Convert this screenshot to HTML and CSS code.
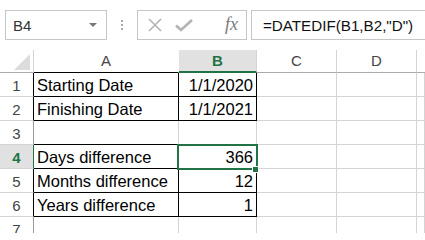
FILE: index.html
```html
<!DOCTYPE html>
<html>
<head>
<meta charset="utf-8">
<link rel="stylesheet" href="styles.css">
</head>
<body>
<div class="app">
  <div class="toolbar">
    <div class="namebox"><span class="ref">B4</span><span class="arrow"></span></div>
    <div class="grip"><i></i><i></i><i></i></div>
    <div class="btns">
      <svg class="ic-x" width="14" height="14" viewBox="0 0 14 14"><path d="M1 1 L13 13 M13 1 L1 13" stroke="#b4b4b4" stroke-width="1.6" fill="none"/></svg>
      <svg class="ic-ok" width="18" height="14" viewBox="0 0 18 14"><path d="M1 7.5 L6 12 L17 2" stroke="#b4b4b4" stroke-width="2.6" fill="none"/></svg>
      <span class="fx">fx</span>
    </div>
    <div class="formula">=DATEDIF(B1,B2,"D")</div>
  </div>
  <div class="sheet">
    <div class="grid">
      <div class="c corner"><span class="tri"></span></div>
      <div class="c ch ch-a">A</div>
      <div class="c ch ch-sel">B</div>
      <div class="c ch">C</div>
      <div class="c ch">D</div>
      <div class="c ch ch-e"></div>

      <div class="c rh bk-r">1</div>
      <div class="c t bk-r bk-b">Starting Date</div>
      <div class="c n bk-r bk-b">1/1/2020</div>
      <div class="c"></div><div class="c"></div><div class="c"></div>

      <div class="c rh bk-r">2</div>
      <div class="c t bk-r bk-b">Finishing Date</div>
      <div class="c n bk-r bk-b">1/1/2021</div>
      <div class="c"></div><div class="c"></div><div class="c"></div>

      <div class="c rh">3</div>
      <div class="c t bk-b"></div>
      <div class="c n bk-b"></div>
      <div class="c"></div><div class="c"></div><div class="c"></div>

      <div class="c rh rh-sel">4</div>
      <div class="c t bk-r bk-b">Days difference</div>
      <div class="c n bk-r bk-b">366</div>
      <div class="c"></div><div class="c"></div><div class="c"></div>

      <div class="c rh bk-r">5</div>
      <div class="c t bk-r bk-b">Months difference</div>
      <div class="c n bk-r bk-b">12</div>
      <div class="c"></div><div class="c"></div><div class="c"></div>

      <div class="c rh bk-r">6</div>
      <div class="c t bk-r bk-b">Years difference</div>
      <div class="c n bk-r bk-b">1</div>
      <div class="c"></div><div class="c"></div><div class="c"></div>

      <div class="c rh">7</div>
      <div class="c t"></div>
      <div class="c n"></div>
      <div class="c"></div><div class="c"></div><div class="c"></div>
    </div>
    <div class="sel"></div>
    <div class="handle"></div>
  </div>
</div>
</body>
</html>
```

FILE: styles.css
```css
* { box-sizing: border-box; }
html, body { margin: 0; padding: 0; background: #fff; }
body { width: 425px; height: 233px; overflow: hidden; font-family: "Liberation Sans", Arial, sans-serif; }

.app { width: 425px; height: 233px; overflow: hidden; }

.toolbar {
  height: 50px;
  padding: 10px 0 0 5px;
  display: flex;
  align-items: flex-start;
}
.toolbar > * { flex-shrink: 0; }
.namebox {
  width: 102px; height: 30px;
  border: 1px solid #c6c6c6;
  display: flex; align-items: center;
  padding-left: 7px;
  position: relative;
}
.ref { font-size: 15px; color: #333; }
.arrow {
  position: absolute; right: 9px; top: 12px;
  width: 0; height: 0;
  border-left: 4px solid transparent;
  border-right: 4px solid transparent;
  border-top: 4px solid #777;
}
.grip {
  width: 30px; height: 30px;
  display: flex; flex-direction: column; align-items: center; justify-content: center; gap: 2px;
}
.grip i { display: block; width: 2px; height: 2px; background: #a8a8a8; }
.btns {
  width: 110px; height: 30px;
  border: 1px solid #c6c6c6;
  display: flex; align-items: center;
  padding-left: 10px;
}
.ic-x { margin-right: 13px; }
.ic-ok { margin-right: 32px; }
.fx { font-family: "Liberation Serif", "Times New Roman", serif; font-style: italic; font-size: 18px; color: #7a7a7a; margin-top: -2px; }
.formula {
  width: 200px; height: 30px;
  margin-left: 4px;
  border: 1px solid #c6c6c6;
  border-right: none;
  padding-left: 11px;
  display: flex; align-items: center;
  font-size: 15.2px; color: #111;
  white-space: nowrap;
}

.sheet { position: relative; }
.grid {
  display: grid;
  grid-template-columns: 34px 145px 78px 80px 80px 1fr;
  grid-template-rows: 23px repeat(7, 24px);
}
.c {
  border-right: 1px solid #d4d4d4;
  border-bottom: 1px solid #d4d4d4;
  font-size: 16.5px;
  color: #000;
  white-space: nowrap;
  overflow: hidden;
  line-height: 25px;
}
.corner { position: relative; border-bottom-color: #ababab; border-right-color: #d4d4d4; }
.tri {
  position: absolute; right: 3px; bottom: 2px;
  width: 0; height: 0;
  border-left: 16px solid transparent;
  border-bottom: 16px solid #dcdcdc;
}
.ch {
  text-align: center;
  font-size: 15px;
  color: #444;
  line-height: 22px;
  border-bottom-color: #ababab;
}
.ch-a { border-bottom-color: #000; border-right-color: #fff; }
.ch-sel {
  background: #e1e1e1;
  color: #217346;
  font-weight: bold;
  border-bottom: 2px solid #217346;
  border-right-color: #d4d4d4;
}
.ch-e { border-right: none; }
.rh {
  text-align: center;
  font-size: 15px;
  color: #444;
  border-right-color: #9b9b9b;
  border-bottom-color: #d4d4d4;
}
.rh-sel {
  background: #e1e1e1;
  color: #217346;
  font-weight: bold;
  border-right-color: #217346;
}
.t { padding-left: 3px; }
.n { text-align: right; padding-right: 3px; }
.bk-r { border-right-color: #000; }
.bk-b { border-bottom-color: #000; }
.rh.bk-r { border-right-color: #000; }

.sel {
  position: absolute;
  left: 177px; top: 94px;
  width: 81px; height: 26px;
  border: 2px solid #217346;
}
.handle {
  position: absolute;
  left: 252px; top: 116px;
  width: 7px; height: 7px;
  background: #217346;
  border: 1px solid #fff;
}
```
